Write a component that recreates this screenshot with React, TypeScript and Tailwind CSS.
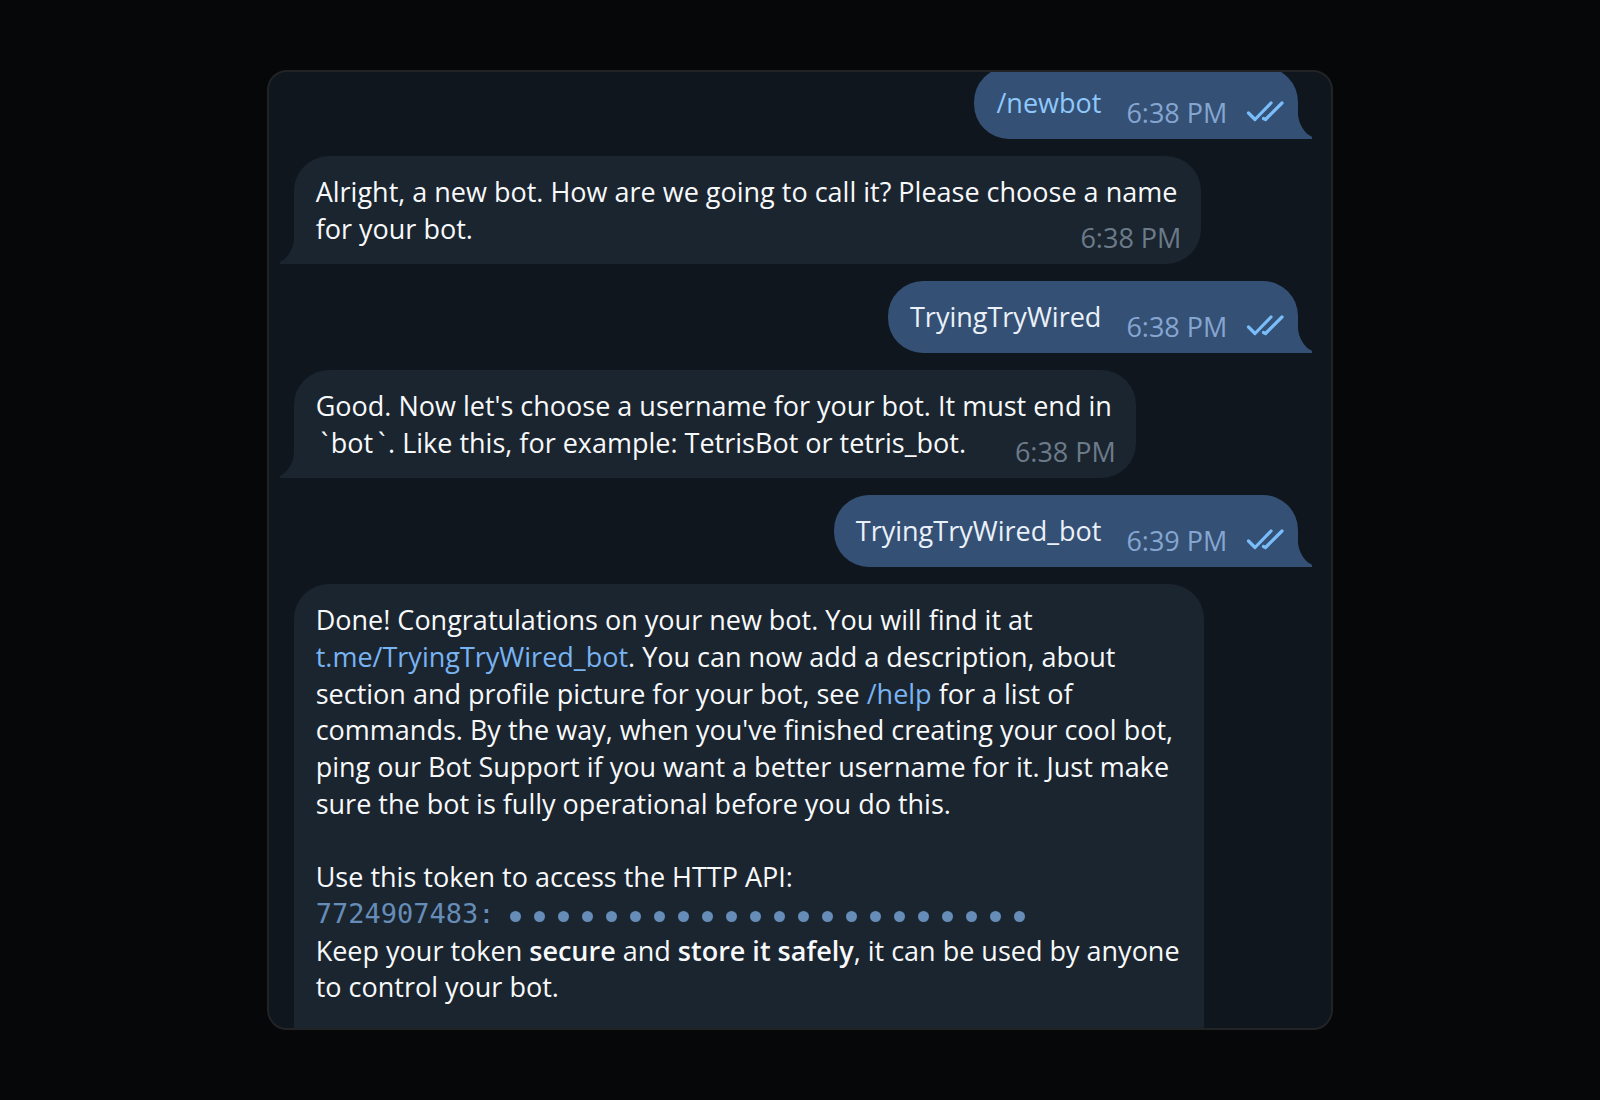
import type { ReactNode } from "react"

type Side = "in" | "out"

const DOT_COUNT = 22

function Tail({ side }: { side: Side }) {
  return side === "out" ? (
    <svg className="absolute bottom-0 left-full" width="14" height="24" viewBox="0 0 14 24" fill="#355075">
      <path d="M-1 0H0C1 9 6 18 13.5 21.5L14 22.3V24H-1Z" />
    </svg>
  ) : (
    <svg className="absolute right-full bottom-0" width="14" height="24" viewBox="0 0 14 24" fill="#1b2530">
      <path d="M15 0H14C13 9 8 18 .5 21.5L0 22.3V24H15Z" />
    </svg>
  )
}

function ReadTicks() {
  return (
    <svg
      width="38"
      height="22"
      viewBox="0 0 38 22"
      fill="none"
      stroke="#7abdfb"
      strokeWidth="3.2"
      strokeLinecap="round"
      strokeLinejoin="round"
      role="img"
      aria-label="Read"
    >
      <path d="M2.5 13L9 19.5L25 3" />
      <path d="M17.5 18.5L19.5 19.5L36 3" />
    </svg>
  )
}

function Backtick() {
  return <span className="inline-block w-[15px] pl-[5px]">`</span>
}

function Incoming({ time, children }: { time: string; children: ReactNode }) {
  return (
    <li className="relative flex flex-col self-start rounded-[35px] rounded-bl-none bg-[#1b2530] pt-[18px] pr-6 pb-[7px] pl-[22px]">
      <p className="text-[#f8f9fa]">{children}</p>
      <time className="-mt-[27px] -mr-[4px] self-end text-[#6c7b89]">{time}</time>
      <Tail side="in" />
    </li>
  )
}

function Outgoing({ time, children }: { time: string; children: ReactNode }) {
  return (
    <li className="relative flex h-[72px] self-end rounded-[35px] rounded-br-none bg-[#355075] pt-[18px] pr-[14px] pl-[22px]">
      <p className="text-[#eaf1f8]">{children}</p>
      <time className="mt-[10px] ml-[25px] text-[#85a6d1]">{time}</time>
      <span className="mt-[15px] ml-[19px]">
        <ReadTicks />
      </span>
      <Tail side="out" />
    </li>
  )
}

function Token() {
  return (
    <span className="flex items-center text-[#668db8]">
      <code className="font-['DejaVu_Sans_Mono',monospace]">7724907483:</code>
      <span className="ml-4 flex gap-[13px] pt-1" aria-label="hidden token">
        {Array.from({ length: DOT_COUNT }, (_, i) => (
          <span key={i} className="size-[11px] rounded-full bg-[#668db8]" />
        ))}
      </span>
    </span>
  )
}

export default function App() {
  return (
    <main className="flex min-h-screen items-center justify-center bg-[#060708] font-['Open_Sans',sans-serif] text-[27px] leading-[1.36]">
      <section className="w-2/3 min-w-[1000px] overflow-hidden rounded-[20px] border-2 border-[#222324] bg-[#0f161e]">
        <ul className="-mt-[5px] flex flex-col gap-[17px] pr-[33px] pl-[25px] whitespace-nowrap">
          <Outgoing time="6:38 PM">
            <a href="#newbot" className="text-[#8ec8fc]">
              /newbot
            </a>
          </Outgoing>

          <Incoming time="6:38 PM">
            Alright, a new bot. How are we going to call it? Please choose a name
            <br />
            for your bot.
          </Incoming>

          <Outgoing time="6:38 PM">TryingTryWired</Outgoing>

          <Incoming time="6:38 PM">
            Good. Now let's choose a username for your bot. It must end in
            <br />
            <Backtick />
            bot
            <Backtick />. Like this, for example: TetrisBot or tetris_bot.
          </Incoming>

          <Outgoing time="6:39 PM">TryingTryWired_bot</Outgoing>

          <li className="self-start rounded-t-[35px] bg-[#1b2530] pt-[18px] pr-6 pb-[22px] pl-[22px] text-[#f8f9fa]">
            <p>
              Done! Congratulations on your new bot. You will find it at
              <br />
              <a href="#bot" className="text-[#78b3f2]">
                t.me/TryingTryWired_bot
              </a>
              . You can now add a description, about
              <br />
              section and profile picture for your bot, see{" "}
              <a href="#help" className="text-[#78b3f2]">
                /help
              </a>{" "}
              for a list of
              <br />
              commands. By the way, when you've finished creating your cool bot,
              <br />
              ping our Bot Support if you want a better username for it. Just make
              <br />
              sure the bot is fully operational before you do this.
              <br />
              <br />
              Use this token to access the HTTP API:
              <br />
              <Token />
              Keep your token <strong className="font-semibold">secure</strong> and{" "}
              <strong className="font-semibold">store it safely</strong>, it can be used by anyone
              <br />
              to control your bot.
            </p>
          </li>
        </ul>
      </section>
    </main>
  )
}
